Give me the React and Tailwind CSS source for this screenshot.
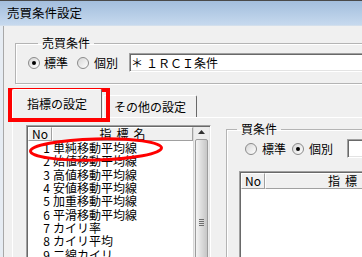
import React from 'react'

const FONT = "font-['Noto_Sans_CJK_JP','Noto_Sans',sans-serif]"

const SUNKEN =
  'border border-t-[#a0a0a0] border-l-[#a0a0a0] border-b-white border-r-white shadow-[inset_1px_1px_0_#696969,inset_-1px_-1px_0_#e3e3e3]'

const RAISED =
  'border-t border-l border-t-white border-l-white border-r border-b border-r-[#a0a0a0] border-b-[#a0a0a0]'

const ITEMS = [
  '単純移動平均線',
  '始値移動平均線',
  '高値移動平均線',
  '安値移動平均線',
  '加重移動平均線',
  '平滑移動平均線',
  'カイリ率',
  'カイリ平均',
  '二線カイリ',
  '乖離帯',
]

function Radio({ checked }) {
  return (
    <span className="w-[12px] h-[12px] shrink-0 rounded-full border border-[#8a8a8a] bg-gradient-to-br from-[#d6d6d6] to-white flex items-center justify-center">
      {checked && <span className="w-[4px] h-[4px] rounded-full bg-black" />}
    </span>
  )
}

function Legend({ children }) {
  return <legend className="ml-[10px] px-[4px] leading-[14px] text-[12px]">{children}</legend>
}

function Header({ tall }) {
  return (
    <div className={`flex shrink-0 ${tall ? 'h-[16px]' : 'h-[14px]'} bg-[#f0f0f0]`}>
      <div className={`w-[24px] ${RAISED} flex items-center justify-center leading-none`}>No</div>
      <div className={`flex-1 ${RAISED} flex items-center justify-center gap-[5px] leading-none`}>
        <span>指</span>
        <span>標</span>
        <span>名</span>
      </div>
    </div>
  )
}

export default function App() {
  return (
    <div className={`relative w-[362px] h-[257px] overflow-hidden bg-[#f0f0f0] text-[12px] text-black ${FONT}`}>
      {/* Title bar */}
      <div className="h-[26px] border-t border-[#4a4a4a] border-b border-b-[#d3dfec] bg-gradient-to-b from-[#a3bedd] to-[#c6d9ee] flex items-center pl-[7px]">
        <span className="text-[12.5px] leading-none">売買条件設定</span>
      </div>

      <div className="flex">
        {/* Window frame */}
        <div className="w-[4px] shrink-0 h-[240px] bg-[#e6ecf3] border-r border-[#a8a8a8]" />

        <div className="flex flex-col">
          {/* 売買条件 */}
          <fieldset className="ml-[11px] mt-[10px] w-[420px] border border-[#b4b4b4] shadow-[inset_1px_1px_0_#fff,1px_1px_0_#fff] pl-[12px] pt-[3px] pb-[11px]">
            <Legend>売買条件</Legend>
            <div className="flex items-center">
              <Radio checked />
              <span className="ml-[4px] leading-none">標準</span>
              <span className="ml-[9px]"><Radio /></span>
              <span className="ml-[5px] leading-none">個別</span>
              <div className={`ml-[11px] w-[280px] h-[19px] bg-white ${SUNKEN} flex items-center pl-[1px] leading-none`}>
                <span>＊</span>
                <span className="ml-[3px]">１</span>
                <span>ＲＣＩ条件</span>
              </div>
            </div>
          </fieldset>

          {/* Tab control */}
          <div className="ml-[8px] mt-[5px]">
            <div className="flex items-end h-[28px]">
              <div className="relative z-10 w-[90px] h-[29px] -mb-px bg-[#f0f0f0] border-l border-t border-white border-r border-r-[#696969] rounded-t-[2px] flex items-center justify-center leading-none">
                指標の設定
              </div>
              <div className="ml-px w-[94px] h-[22px] bg-[#f0f0f0] border-l border-t border-white border-r border-r-[#696969] rounded-t-[2px] flex items-center justify-center leading-none">
                その他の設定
              </div>
            </div>

            <div className="border-t border-l border-white w-[400px] h-[140px] flex pl-[13px] pt-[4px]">
              {/* Indicator list */}
              <div className={`mt-[3px] w-[185px] h-[140px] bg-white ${SUNKEN} p-px flex shrink-0`}>
                <div className="flex-1 flex flex-col">
                  <Header />
                  <div className="flex flex-col">
                    {ITEMS.map((name, i) => (
                      <div key={name} className="flex h-[13.33px] leading-[13.33px] whitespace-nowrap">
                        <span className="w-[22px] text-right">{i + 1}</span>
                        <span className="ml-[3px]">{name}</span>
                      </div>
                    ))}
                  </div>
                </div>
                {/* Scrollbar */}
                <div className="w-[16px] shrink-0 bg-[#ececec] border-l border-[#d8d8d8] flex flex-col">
                  <div className="h-[19px] flex items-center justify-center">
                    <svg width="7" height="4" viewBox="0 0 7 4">
                      <path d="M0 4 L3.5 0 L7 4 Z" fill="#303030" />
                    </svg>
                  </div>
                  <div className="mt-[2px] mx-[1px] h-[160px] rounded-[2px] border border-[#9c9c9c] bg-gradient-to-r from-[#f4f4f4] via-[#dcdcdc] to-[#c6c6c6] flex flex-col items-center pt-[79px]">
                    <div className="w-[5px] h-px bg-[#6e6e6e]" />
                    <div className="w-[5px] h-px bg-[#6e6e6e] mt-px" />
                    <div className="w-[5px] h-px bg-[#6e6e6e] mt-px" />
                    <div className="w-[5px] h-px bg-[#6e6e6e] mt-px" />
                  </div>
                </div>
              </div>

              {/* 買条件 */}
              <fieldset className="ml-[15px] w-[200px] h-[160px] shrink-0 border border-[#b4b4b4] shadow-[inset_1px_1px_0_#fff,1px_1px_0_#fff] pt-[3px]">
                <Legend>買条件</Legend>
                <div className="flex items-center pl-[18px]">
                  <Radio />
                  <span className="ml-[5px] leading-none">標準</span>
                  <span className="ml-[6px]"><Radio checked /></span>
                  <span className="ml-[5px] leading-none">個別</span>
                  <div className={`ml-[14px] w-[60px] h-[19px] bg-white ${SUNKEN}`} />
                </div>
                <div className={`ml-[12px] mt-[13px] w-[200px] h-[100px] bg-white ${SUNKEN} p-px`}>
                  <Header tall />
                </div>
              </fieldset>
            </div>
          </div>
        </div>
      </div>

      {/* Red annotations */}
      <div className="absolute left-[8px] top-[88px] w-[102px] h-[34px] border-[4px] border-[#ff0000]" />
      <svg className="absolute left-[28px] top-[136px]" width="138" height="27" viewBox="0 0 138 27">
        <ellipse cx="68" cy="13.5" rx="65.5" ry="10.5" fill="none" stroke="#ff0000" strokeWidth="3" transform="rotate(-1.5 68 13.5)" />
      </svg>
    </div>
  )
}
